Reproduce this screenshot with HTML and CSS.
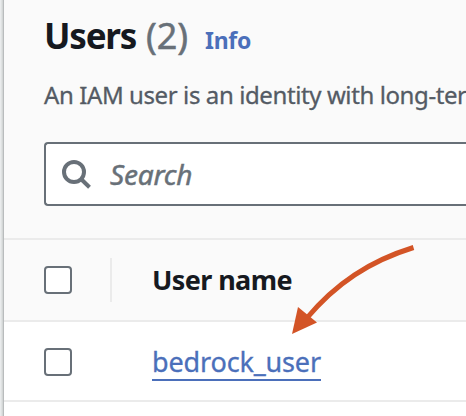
FILE: index.html
```html
<!DOCTYPE html>
<html lang="en">
<head>
<meta charset="utf-8">
<title>Users</title>
<link rel="stylesheet" href="styles.css">
</head>
<body>
<main class="panel">
  <header class="panel-header">
    <div class="heading">
      <h1 class="title">Users</h1>
      <span class="count">(2)</span>
      <a class="info">Info</a>
    </div>
    <p class="description">An IAM user is an identity with long-ter</p>
    <div class="search">
      <svg class="search-icon" width="32" height="32" viewBox="0 0 32 32" fill="none" stroke="#687078" stroke-width="4">
        <circle cx="14" cy="14" r="10"/>
        <path d="M21 21l8.500 8.300"/>
      </svg>
      <span class="placeholder">Search</span>
    </div>
  </header>
  <div class="row row-head">
    <span class="checkbox"></span>
    <span class="divider"></span>
    <span class="column-name">User name</span>
  </div>
  <div class="row row-user">
    <span class="checkbox"></span>
    <a class="user-link">bedrock_user</a>
  </div>
</main>
<svg class="arrow" width="130" height="100" viewBox="0 0 130 100">
  <path d="M128.500 7.500C85 21 51 43 21 79" fill="none" stroke="#d35426" stroke-width="5"/>
  <path d="M7 94L13 67L32 82.500Z" fill="#d35426"/>
</svg>
</body>
</html>
```
FILE: styles.css
```css
* { box-sizing: border-box; }
body {
  margin: 0;
  height: 416px;
  overflow: hidden;
  position: relative;
  background: #fff;
  font-family: "Noto Sans", "Open Sans", sans-serif;
  white-space: nowrap;
}
.panel {
  height: 416px;
  border-left: 4px solid transparent;
  border-image: linear-gradient(to right, #e9ebec 0 1px, #dfe2e2 1px 2px, #d3d6d6 2px 3px, #b9bcbd 3px 4px) 0 0 0 4 / 0 0 0 4px;
}
.panel-header {
  height: 238px;
  padding: 11px 0 0 40px;
  background: #fafafa;
}
.heading { display: flex; align-items: baseline; height: 50px; line-height: 50px; }
.title { margin: 0; width: 102px; font-size: 35px; font-weight: 700; color: #16191f; letter-spacing: -1.2px; }
.count { width: 59px; font-size: 36px; color: #687078; letter-spacing: -.1px; -webkit-text-stroke: .5px; }
.info { font-size: 23px; font-weight: 700; color: #4b6fba; letter-spacing: -.3px; }
.description { margin: 18px 0 0; height: 32px; line-height: 32px; font-size: 24px; color: #545b64; letter-spacing: -.4px; -webkit-text-stroke: .3px; }
.search {
  display: flex;
  align-items: center;
  height: 64px;
  margin-top: 31px;
  padding-left: 14px;
  border: 2px solid #687078;
  border-right: 0;
  border-radius: 4px 0 0 4px;
  background: #fff;
}
.search-icon { flex: none; }
.placeholder { margin-left: 18px; font-size: 28px; font-style: italic; color: #687078; letter-spacing: -.2px; -webkit-text-stroke: .5px; }
.row { display: flex; align-items: center; padding-left: 40px; }
.row-head { height: 84px; border-top: 2px solid #ebebeb; border-bottom: 2px solid #ebebeb; background: #fafafa; }
.row-user { height: 80px; padding-top: 2px; border-bottom: 2px solid #ebebeb; }
.checkbox { width: 28px; height: 28px; border: 2px solid #687078; border-radius: 4px; background: #fff; }
.divider { width: 2px; height: 44px; margin-left: 38px; background: #ebebeb; }
.column-name { margin: 0 0 2px 40px; font-size: 27px; font-weight: 700; color: #16191f; letter-spacing: -.6px; }
.user-link { width: 169px; height: 37px; line-height: 36px; margin-left: 80px; font-size: 27px; color: #4b6fba; letter-spacing: -.15px; -webkit-text-stroke: .3px; border-bottom: 2px solid #4b6fba; }
.arrow { position: absolute; left: 285px; top: 240px; }
```
